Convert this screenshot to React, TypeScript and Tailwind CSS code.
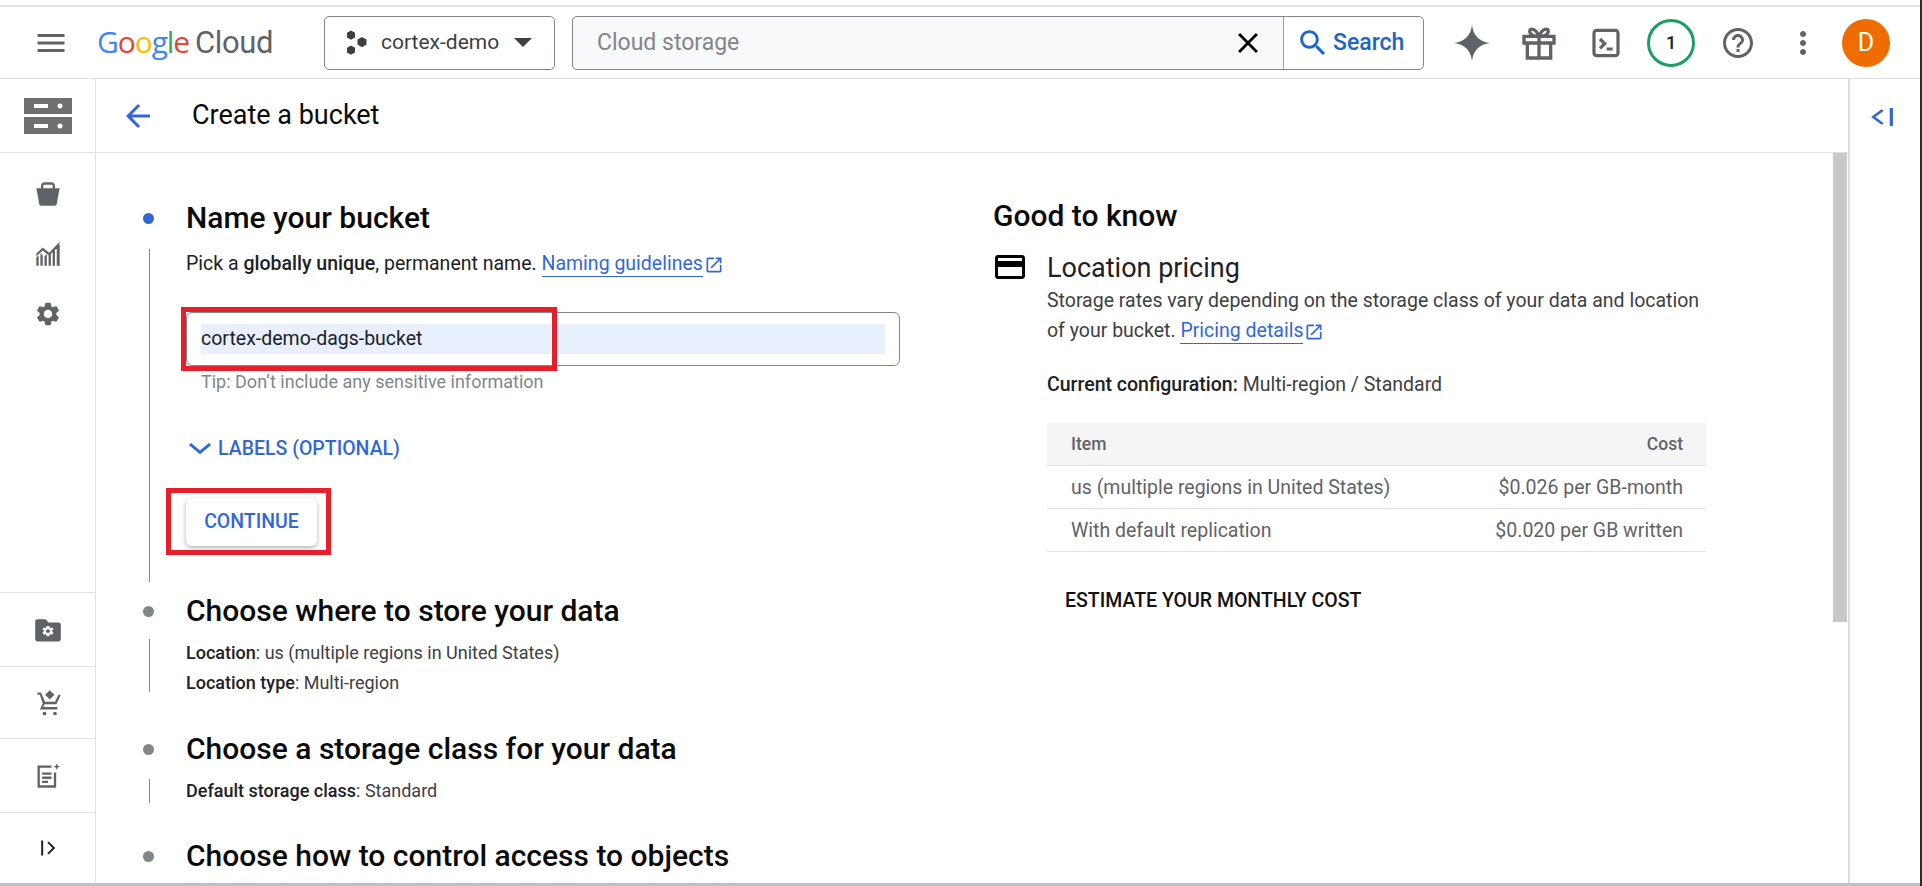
import React from "react";

const P = ({ d, className }: { d: string; className?: string }) => (
  <svg viewBox="0 0 24 24" fill="currentColor" className={className} preserveAspectRatio="none"><path d={d} /></svg>
);

const MENU = "M3 18h18v-2H3v2zm0-5h18v-2H3v2zm0-7v2h18V6H3z";
const BACK = "M20 11H7.83l5.59-5.59L12 4l-8 8 8 8 1.41-1.41L7.83 13H20v-2z";
const SEARCH = "M15.5 14h-.79l-.28-.27C15.41 12.59 16 11.11 16 9.5 16 5.91 13.09 3 9.5 3S3 5.91 3 9.5 5.91 16 9.5 16c1.61 0 3.09-.59 4.23-1.57l.27.28v.79l5 4.99L20.49 19l-4.99-5zm-6 0C7.01 14 5 11.99 5 9.5S7.01 5 9.5 5 14 7.01 14 9.5 11.99 14 9.5 14z";
const CLOSE = "M19 6.41L17.59 5 12 10.59 6.41 5 5 6.41 10.59 12 5 17.59 6.41 19 12 13.41 17.59 19 19 17.59 13.41 12z";
const HELP = "M11 18h2v-2h-2v2zm1-16C6.48 2 2 6.48 2 12s4.48 10 10 10 10-4.48 10-10S17.52 2 12 2zm0 18c-4.41 0-8-3.59-8-8s3.59-8 8-8 8 3.59 8 8-3.59 8-8 8zm0-14c-2.21 0-4 1.79-4 4h2c0-1.1.9-2 2-2s2 .9 2 2c0 2-3 1.75-3 5h2c0-2.25 3-2.5 3-5 0-2.21-1.79-4-4-4z";
const MORE = "M12 8c1.1 0 2-.9 2-2s-.9-2-2-2-2 .9-2 2 .9 2 2 2zm0 2c-1.1 0-2 .9-2 2s.9 2 2 2 2-.9 2-2-.9-2-2-2zm0 6c-1.1 0-2 .9-2 2s.9 2 2 2 2-.9 2-2-.9-2-2-2z";
const CARD = "M20 4H4c-1.11 0-1.99.89-1.99 2L2 18c0 1.11.89 2 2 2h16c1.11 0 2-.89 2-2V6c0-1.11-.89-2-2-2zm0 14H4v-6h16v6zm0-10H4V6h16v2z";
const OPEN = "M19 19H5V5h7V3H5c-1.11 0-2 .9-2 2v14c0 1.1.89 2 2 2h14c1.1 0 2-.9 2-2v-7h-2v7zM14 3v2h3.59l-9.83 9.83 1.41 1.41L19 6.41V10h2V3h-7z";
const GEAR = "M19.14 12.94c.04-.3.06-.61.06-.94 0-.32-.02-.64-.07-.94l2.03-1.58c.18-.14.23-.41.12-.61l-1.92-3.32c-.12-.22-.37-.29-.59-.22l-2.39.96c-.5-.38-1.03-.7-1.62-.94l-.36-2.54c-.04-.24-.24-.41-.48-.41h-3.84c-.24 0-.43.17-.47.41l-.36 2.54c-.59.24-1.13.57-1.62.94l-2.39-.96c-.22-.08-.47 0-.59.22L2.74 8.87c-.12.21-.08.47.12.61l2.03 1.58c-.05.3-.09.63-.09.94s.02.64.07.94l-2.03 1.58c-.18.14-.23.41-.12.61l1.92 3.32c.12.22.37.29.59.22l2.39-.96c.5.38 1.03.7 1.62.94l.36 2.54c.05.24.24.41.48.41h3.84c.24 0 .44-.17.47-.41l.36-2.54c.59-.24 1.13-.56 1.62-.94l2.39.96c.22.08.47 0 .59-.22l1.92-3.32c.12-.22.07-.47-.12-.61l-2.01-1.58zM12 15.6c-1.98 0-3.6-1.62-3.6-3.6s1.62-3.6 3.6-3.6 3.6 1.62 3.6 3.6-1.62 3.6-3.6 3.6z";

const Svg = ({ children, className, vb = "0 0 24 24" }: { children: React.ReactNode; className?: string; vb?: string }) => (
  <svg viewBox={vb} className={className} preserveAspectRatio="none">{children}</svg>
);

const ExtLink = ({ children }: { children: string }) => (
  <span className="inline-flex items-center text-[#3367d6]">
    <span className="border-b border-[#3367d6] leading-[24px]">{children}</span>
    <P d={OPEN} className="w-[20px] h-[20px] ml-[1px]" />
  </span>
);

const StepHead = ({ title, blue }: { title: string; blue?: boolean }) => (
  <div className="flex items-center h-[34px]">
    <div className="w-[43px] shrink-0 flex items-center">
      <span className={`w-[11px] h-[11px] rounded-full ${blue ? "bg-[#3367d6]" : "bg-[#80868b]"}`} />
    </div>
    <h2 className="text-[30px] font-medium leading-[34px] text-[#0b0b0b] whitespace-nowrap">{title}</h2>
  </div>
);

const Rail = ({ children, h }: { children: React.ReactNode; h: string }) => (
  <div className={`${h} shrink-0 flex items-center justify-center border-b border-[#e0e0e0] text-[#5f6368]`}>{children}</div>
);

export default function App() {
  return (
    <div className="w-[1922px] h-[886px] overflow-hidden bg-white flex font-['Roboto',sans-serif] text-[#202124]">
      <div className="w-[1920px] shrink-0 flex flex-col">
        <div className="h-[5px] shrink-0 bg-white" />
        <div className="h-[2px] shrink-0 bg-[#e3e3e3]" />
        {/* top bar */}
        <header className="h-[72px] shrink-0 border-b border-[#e0e0e0] flex items-center">
          <P d={MENU} className="w-[36px] h-[36px] ml-[33px] text-[#5f6368]" />
          <div className="ml-[28px] w-[176px] flex items-baseline font-['Open_Sans',sans-serif] text-[30px] leading-[36px] tracking-[-1.1px]">
            <span className="text-[#4285f4]">G</span>
            <span className="text-[#ea4335]">o</span>
            <span className="text-[#fbbc04]">o</span>
            <span className="text-[#4285f4]">g</span>
            <span className="text-[#34a853]">l</span>
            <span className="text-[#ea4335]">e</span>
            <span className="ml-[6px] text-[#5f6368] font-['Roboto',sans-serif] text-[31px] tracking-[-0.4px]">Cloud</span>
          </div>
          <div className="ml-[51px] w-[231px] h-[54px] border border-[#80868b] rounded-[5px] flex items-center text-[#3c4043]">
            <Svg className="ml-[20px] w-[24px] h-[28px] text-[#3c4043]" vb="0 0 24 28">
              <path fill="currentColor" d="M6 1.500l4 2.300v4.600l-4 2.300-4-2.300V3.800zM6 16.500l4 2.300v4.600l-4 2.300-4-2.300v-4.600zM17 8l4.500 2.600v5L17 18.200l-4.500-2.600v-5z" />
            </Svg>
            <span className="ml-[12px] text-[21px] whitespace-nowrap">cortex-demo</span>
            <span className="ml-[15px] w-0 h-0 border-l-[9px] border-r-[9px] border-t-[9px] border-l-transparent border-r-transparent border-t-[#3c4043]" />
          </div>
          <div className="ml-[17px] w-[852px] h-[54px] border border-[#80868b] rounded-[5px] bg-[#f8f9fa] flex items-center">
            <span className="ml-[24px] pt-[2px] text-[23px] text-[#80868b] flex-1">Cloud storage</span>
            <P d={CLOSE} className="w-[34px] h-[34px] text-black mr-[18px]" />
            <div className="w-[140px] h-[52px] border-l border-[#9aa0a6] bg-white rounded-r-[5px] flex items-center text-[#1a66c9] py-[2px]">
              <P d={SEARCH} className="ml-[12px] w-[34px] h-[34px]" />
              <span className="ml-[3px] pt-[2px] text-[23px] font-medium">Search</span>
            </div>
          </div>
          <Svg className="ml-[30px] w-[36px] h-[36px] text-[#5f6368]">
            <path fill="currentColor" d="M12 0c.9 6.800 4.400 10.900 12 12-7.600 1.100-11.100 5.200-12 12-.9-6.800-4.400-10.900-12-12 7.600-1.100 11.100-5.200 12-12z" />
          </Svg>
          <Svg className="ml-[29px] w-[40px] h-[40px] text-[#5f6368]">
            <path fill="none" stroke="currentColor" strokeWidth="2" d="M3 8h18v4H3zM5 12v9h14v-9M12 8v13M12 8C10 3 6 2.500 6.500 5.500 7 7.500 10 8 12 8zM12 8c2-5 6-5.500 5.500-2.500C17 7.500 14 8 12 8z" />
          </Svg>
          <Svg className="ml-[31px] w-[32px] h-[32px] text-[#5f6368]">
            <rect x="3" y="2.500" width="18" height="19" rx="2" fill="none" stroke="currentColor" strokeWidth="2.400" />
            <path fill="none" stroke="currentColor" strokeWidth="2.400" d="M7.500 9l3.500 3.500-3.500 3.500M12.500 16.500h4.500" />
          </Svg>
          <div className="ml-[25px] w-[48px] h-[48px] rounded-full border-[3px] border-[#1e9e62] flex items-center justify-center text-[18px] font-medium text-[#202124]">1</div>
          <P d={HELP} className="ml-[25px] w-[36px] h-[36px] text-[#5f6368]" />
          <P d={MORE} className="ml-[29px] w-[36px] h-[36px] text-[#5f6368]" />
          <div className="ml-[21px] w-[48px] h-[48px] rounded-full bg-[#ef6c00] text-white text-[25px] flex items-center justify-center">D</div>
        </header>

        <div className="flex flex-1 min-h-0">
          {/* left rail */}
          <aside className="w-[96px] shrink-0 border-r border-[#e0e0e0] flex flex-col">
            <Rail h="h-[74px]">
              <Svg className="w-[48px] h-[36px] text-[#6f6f6f]" vb="0 0 48 36">
                <path fill="currentColor" fillRule="evenodd" d="M0 0h48v16H0zM10 6v4h14V6zM36 5.500a2.500 2.500 0 100 5 2.500 2.500 0 000-5zM0 19h48v17H0zM10 26v4h14v-4zM36 25.500a2.500 2.500 0 100 5 2.500 2.500 0 000-5z" />
              </Svg>
            </Rail>
            <div className="h-[440px] shrink-0 border-b border-[#e0e0e0] flex flex-col items-center pt-[27px] gap-[32px] text-[#5f6368]">
              <Svg className="w-[28px] h-[28px]">
                <path fill="currentColor" d="M2 7h20l-2.500 13.500c-.1.800-.8 1.500-1.700 1.500H6.200c-.9 0-1.600-.7-1.700-1.500zM6 7.500V5c0-1.700 1.300-3 3-3h6c1.700 0 3 1.300 3 3v2.500h-2V5c0-.6-.4-1-1-1H9c-.6 0-1 .4-1 1v2.500z" />
              </Svg>
              <Svg className="w-[28px] h-[28px]">
                <path fill="currentColor" d="M2 22v-7l2-2v9zM5.500 22V11.500l2 1.700V22zM9 22v-8l2-1.700V22zM12.500 22v-9l2-1.500V22zM16 22V10l2-2v14zM19.500 22V6.500l2.500-2.500V22zM2 11.500l5.500-5 5.500 4.500 9-9.500-.5 3.500-8.500 8.500-5.500-4.500-5.500 5z" />
              </Svg>
              <P d={GEAR} className="w-[28px] h-[28px]" />
            </div>
            <Rail h="h-[74px]">
              <Svg className="w-[28px] h-[26px]">
                <path fill="currentColor" d="M3 2h7l2.500 3H21c1.100 0 2 .9 2 2v13.500c0 1.100-.9 2-2 2H3c-1.100 0-2-.9-2-2V4c0-1.100.9-2 2-2z" />
                <g transform="translate(6 7) scale(.5)"><path fill="#fff" d={GEAR} /></g>
              </Svg>
            </Rail>
            <Rail h="h-[72px]">
              <Svg className="w-[28px] h-[28px]">
                <path fill="currentColor" d="M13.500 1l4 4-4 4-4-4zM3 3h3l3.500 8h8.500l3-6h2l-3.800 8H9l-1 2.500h12V17.500H5l2.500-5L5 5H3z" />
                <circle cx="9" cy="21" r="1.600" fill="currentColor" /><circle cx="18" cy="21" r="1.600" fill="currentColor" />
              </Svg>
            </Rail>
            <Rail h="h-[74px]">
              <Svg className="w-[28px] h-[28px]">
                <path fill="none" stroke="currentColor" strokeWidth="2" d="M15 4H4v17h14V9" />
                <path fill="currentColor" d="M7 9h8v2H7zM7 12.500h8v2H7zM7 16h5v2H7zM19.500 1l.8 2.200 2.200.8-2.200.8-.8 2.200-.8-2.200-2.200-.8 2.200-.8z" />
              </Svg>
            </Rail>
            <div className="flex-1 flex items-center justify-center text-[#202124]">
              <Svg className="w-[20px] h-[20px]">
                <path fill="none" stroke="currentColor" strokeWidth="2.400" d="M5 3v18M12 5l7 7-7 7" />
              </Svg>
            </div>
          </aside>

          {/* main */}
          <main className="w-[1752px] shrink-0 flex flex-col min-h-0">
            <div className="h-[74px] shrink-0 border-b border-[#e0e0e0] flex items-center">
              <P d={BACK} className="ml-[24px] w-[36px] h-[36px] text-[#3367d6]" />
              <h1 className="ml-[36px] text-[27px] text-[#0b0b0b]">Create a bucket</h1>
            </div>
            <div className="flex-1 min-h-0 flex overflow-hidden">
              {/* stepper column */}
              <div className="w-[898px] shrink-0 pl-[47px] pt-[48px]">
                <StepHead title="Name your bucket" blue />
                <div className="relative ml-[43px] pb-[36px]">
                  <div className="absolute -left-[37px] top-[14px] bottom-0 border-l border-[#80868b]" />
                  <p className="pt-[16px] text-[19.500px] leading-[25px] whitespace-nowrap text-[#202124]">
                    Pick a <b className="font-medium">globally unique</b>, permanent name. <ExtLink>Naming guidelines</ExtLink>
                  </p>
                  <div className="relative mt-[35px] w-[714px] h-[54px] border border-[#80868b] rounded-[6px] px-[14px] flex items-center">
                    <div className="w-full h-[30px] bg-[#e8f0fe] text-[19.500px] leading-[30px] text-[#202124]">cortex-demo-dags-bucket</div>
                    <div className="absolute -left-[6px] -top-[6px] w-[376px] h-[64px] border-[5px] border-[#e4202c]" />
                  </div>
                  <p className="mt-[6px] ml-[15px] text-[18px] leading-[20px] text-[#80868b]">Tip: Don’t include any sensitive information</p>
                  <div className="mt-[45px] flex items-center text-[#3367d6] h-[24px]">
                    <Svg className="ml-[2px] w-[24px] h-[20px]"><path fill="none" stroke="currentColor" strokeWidth="3.200" d="M2 6l10 10L22 6" /></Svg>
                    <span className="ml-[6px] text-[19.500px] font-medium whitespace-nowrap">LABELS (OPTIONAL)</span>
                  </div>
                  <div className="relative mt-[37px] w-[131px] h-[48px] rounded-[6px] bg-white shadow-[0_2px_5px_rgba(60,64,67,0.4)] flex items-center justify-center text-[19.500px] font-medium text-[#3367d6]">
                    CONTINUE
                    <div className="absolute -left-[20px] -top-[10px] w-[165px] h-[67px] border-[5px] border-[#e4202c]" />
                  </div>
                </div>
                <div className="h-[12px]" />
                <StepHead title="Choose where to store your data" />
                <div className="relative ml-[43px] mt-[10px] h-[66px] text-[18px] leading-[30px] whitespace-nowrap">
                  <div className="absolute -left-[37px] top-[1px] h-[53px] border-l border-[#80868b]" />
                  <p><span className="font-medium">Location</span><span className="text-[#3c4043]">: us (multiple regions in United States)</span></p>
                  <p><span className="font-medium">Location type</span><span className="text-[#3c4043]">: Multi-region</span></p>
                </div>
                <div className="h-[28px]" />
                <StepHead title="Choose a storage class for your data" />
                <div className="relative ml-[43px] mt-[13px] h-[39px] text-[18px] leading-[24px] whitespace-nowrap">
                  <div className="absolute -left-[37px] top-0 h-[24px] border-l border-[#80868b]" />
                  <p><span className="font-medium">Default storage class</span><span className="text-[#3c4043]">: Standard</span></p>
                </div>
                <div className="h-[21px]" />
                <StepHead title="Choose how to control access to objects" />
              </div>

              {/* good to know */}
              <div className="w-[839px] shrink-0 pt-[46px]">
                <h2 className="-ml-[1px] text-[30px] font-medium leading-[34px] text-[#0b0b0b]">Good to know</h2>
                <div className="mt-[18px] flex">
                  <P d={CARD} className="w-[36px] h-[36px] -ml-[2px] -mt-[2px] text-black" />
                  <div className="ml-[19px] w-[665px]">
                    <h3 className="pt-[2px] text-[27px] leading-[30px] text-[#202124]">Location pricing</h3>
                    <p className="pt-[3px] text-[19.500px] leading-[30px] text-[#3c4043]">
                      Storage rates vary depending on the storage class of your data and location of your bucket. <ExtLink>Pricing details</ExtLink>
                    </p>
                    <p className="mt-[24px] text-[19.500px] leading-[30px] text-[#3c4043]"><span className="font-medium text-[#202124]">Current configuration:</span> Multi-region / Standard</p>
                    <div className="mt-[23px] w-[659px] text-[19.500px] text-[#5f6368]">
                      <div className="h-[43px] bg-[#f5f5f5] border-b border-[#e0e0e0] flex items-center justify-between pl-[24px] pr-[23px] text-[17.500px] font-medium"><span>Item</span><span>Cost</span></div>
                      <div className="h-[43px] border-b border-[#e0e0e0] flex items-center justify-between pl-[24px] pr-[23px] pt-[2px]"><span>us (multiple regions in United States)</span><span>$0.026 per GB-month</span></div>
                      <div className="h-[43px] border-b border-[#e0e0e0] flex items-center justify-between pl-[24px] pr-[23px] pt-[2px]"><span>With default replication</span><span>$0.020 per GB written</span></div>
                    </div>
                    <p className="mt-[37px] ml-[18px] text-[19.500px] font-medium leading-[24px] text-[#111] whitespace-nowrap">ESTIMATE YOUR MONTHLY COST</p>
                  </div>
                </div>
              </div>

              {/* scrollbar */}
              <div className="w-[15px] shrink-0 pr-[1px]">
                <div className="h-[469px] bg-[#c8c8c8]" />
              </div>
            </div>
          </main>

          {/* right rail */}
          <aside className="flex-1 border-l-2 border-[#dedede] flex justify-center pt-[26px]">
            <Svg className="w-[32px] h-[24px] -ml-[10px] text-[#3367d6]">
              <path fill="none" stroke="currentColor" strokeWidth="2.400" d="M14 5l-7 7 7 7M20.500 3v18" />
            </Svg>
          </aside>
        </div>
        <div className="h-[3px] shrink-0 bg-[#bcc2c8]" />
      </div>
      <div className="w-[2px] shrink-0 bg-[#2b2b2b]" />
    </div>
  );
}
